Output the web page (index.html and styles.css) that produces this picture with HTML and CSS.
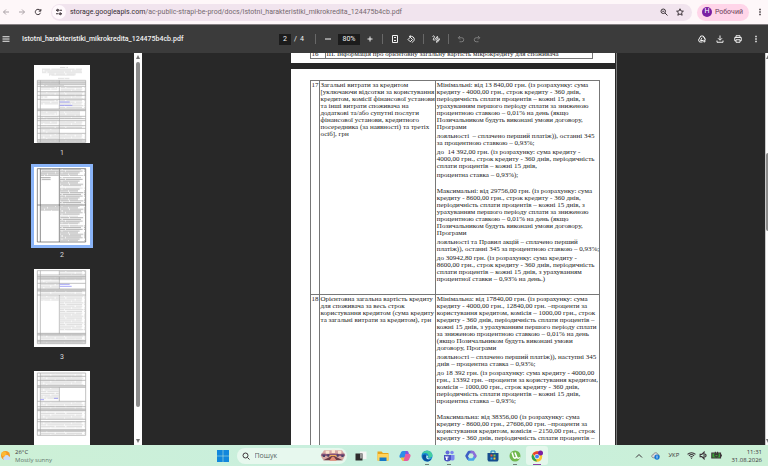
FILE: index.html
```html
<!DOCTYPE html>
<html lang="uk">
<head>
<meta charset="utf-8">
<title>Istotni_harakteristiki_mikrokredita_124475b4cb.pdf</title>
<link rel="stylesheet" href="styles.css">
</head>
<body>
<header class="browser">
  <nav class="nav">
    <button class="ico faded" aria-label="Назад"><svg viewBox="0 0 16 16"><path d="M14 8H3M8 3L3 8l5 5"/></svg></button>
    <button class="ico faded" aria-label="Вперед"><svg viewBox="0 0 16 16"><path d="M2 8h11M8 3l5 5-5 5"/></svg></button>
    <button class="ico" aria-label="Оновити"><svg viewBox="0 0 16 16"><path d="M13 9.500A5.300 5.300 0 1 1 12 4.500L13.500 6M13.700 2v4.300H9.500"/></svg></button>
  </nav>
  <div class="omnibox">
    <button class="site" aria-label="Про сайт"><svg viewBox="0 0 16 16"><path d="M2 4.500h4M10 11.500h4M9 4.500h5M2 11.500h5"/><circle cx="5.500" cy="4.500" r="2"/><circle cx="10.500" cy="11.500" r="2"/></svg></button>
    <a class="url" href="#"><span class="host">storage.googleapis.com</span>/ac-public-strapi-be-prod/docs/Istotni_harakteristiki_mikrokredita_124475b4cb.pdf</a>
    <button class="ico" aria-label="Масштаб"><svg viewBox="0 0 16 16"><circle cx="6.500" cy="6.500" r="4.500"/><path d="M10 10l5 5M4.500 6.500h4"/></svg></button>
    <button class="ico" aria-label="Закладка"><svg viewBox="0 0 16 16"><path d="M8 1.500l2 4.500 4.800.4-3.700 3.200 1.200 4.900L8 11.900l-4.300 2.600 1.200-4.900L1.200 6.400 6 6z"/></svg></button>
  </div>
  <button class="profile"><span class="avatar">Н</span>Робочий</button>
  <button class="ico" aria-label="Меню"><svg viewBox="0 0 16 16"><path class="solid" d="M6.500 1.500h3v3h-3zM6.500 6.500h3v3h-3zM6.500 11.500h3v3h-3z"/></svg></button>
</header>

<div class="toolbar">
  <div class="doc-name">
    <button class="ico" aria-label="Бічна панель"><svg viewBox="0 0 16 16"><path d="M1 3.500h14M1 8h14M1 12.500h14"/></svg></button>
    <h1>Istotni_harakteristiki_mikrokredita_124475b4cb.pdf</h1>
  </div>
  <div class="controls">
    <label class="pager"><input class="field page-no" value="2" aria-label="Сторінка"><span>/</span><span>4</span></label>
    <i class="sep"></i>
    <button class="ico" aria-label="Зменшити"><svg viewBox="0 0 16 16"><path d="M2 8h12"/></svg></button>
    <input class="field zoom" value="80%" aria-label="Масштаб">
    <button class="ico" aria-label="Збільшити"><svg viewBox="0 0 16 16"><path d="M3 8h10M8 3v10"/></svg></button>
    <i class="sep"></i>
    <button class="ico" aria-label="За розміром сторінки"><svg viewBox="0 0 16 16"><path d="M3 1h10v14H3zM6 6l2-2 2 2M6 10l2 2 2-2"/></svg></button>
    <button class="ico" aria-label="Повернути"><svg viewBox="0 0 16 16"><path d="M2 9l4.500-4.500L11 9l-4.500 4.500zM7 1L4.500 3 7 5M5 3c6-1.500 10 2 9.500 6-.3 3-2.500 5-5 5.500"/></svg></button>
    <i class="sep"></i>
    <button class="ico" aria-label="Малювати"><svg viewBox="0 0 16 16"><path d="M1 3c3-3 5 0 3 3S2 11 5 10s4-8 6-7-1 5-3 8M9 13l5-6 1.500 1.500-5 6H9z"/></svg></button>
    <i class="sep"></i>
    <button class="ico off" aria-label="Скасувати"><svg viewBox="0 0 16 16"><path d="M6 2L2.500 5.500 6 9M3 5.500h6.500a4 4 0 0 1 0 8H5"/></svg></button>
    <button class="ico off" aria-label="Повторити"><svg viewBox="0 0 16 16"><path d="M10 2l3.500 3.500L10 9M13 5.500H6.500a4 4 0 0 0 0 8H11"/></svg></button>
  </div>
  <div class="actions">
    <button class="ico" aria-label="Зберегти на Диску"><svg viewBox="0 0 16 16"><path d="M5.500 2h5l4 7M5.500 2L1 10l2 4h6M8 5.500L5 11h5M10.500 2L15 9M12.500 9v6M9.500 12h6"/></svg></button>
    <button class="ico" aria-label="Завантажити"><svg viewBox="0 0 16 16"><path d="M8 1v9M4 6.500L8 10.500l4-4M2 11v3.500h12V11"/></svg></button>
    <button class="ico" aria-label="Друк"><svg viewBox="0 0 16 16"><path d="M4 5V1.500h8V5M4 11.500H1.500V5h13v6.500H12M4 9.500h8v5H4z"/></svg></button>
    <button class="ico" aria-label="Ще"><svg viewBox="0 0 16 16"><path class="solid" d="M6.500 1.500h3v3h-3zM6.500 6.500h3v3h-3zM6.500 11.500h3v3h-3z"/></svg></button>
  </div>
</div>

<main class="workspace">
  <aside class="thumbs">
    <a class="thumb" href="#p1"><svg viewBox="0 0 168 234">
      <defs>
        <pattern id="txt" width="150" height="25" patternUnits="userSpaceOnUse"><path d="M0 2h31M33 2h44M79 2h27M108 2h40M0 7h52M54 7h29M86 7h55M0 12h22M24 12h70M96 12h50M3 17h60M65 17h18M85 17h52M0 22h40M42 22h60M104 22h28" stroke="#a0a0a0" stroke-width="2.500"/></pattern>
        <pattern id="soft" width="150" height="20" patternUnits="userSpaceOnUse"><path d="M0 2h37M40 2h50M92 2h56M0 7h62M65 7h29M97 7h47M2 12h47M52 12h70M125 12h20M0 17h28M31 17h80M113 17h30" stroke="#c6c6c6" stroke-width="2"/></pattern>
      </defs>
      <path fill="#fff" d="M0 0h168v234H0z"/>
      <path fill="url(#soft)" d="M78 5h24v5H78zM24 10h120v15H24zM45 25h80v8H45zM72 38h34v5H72z"/>
      <path fill="#ddd" d="M10 50h145v8H10zM10 132h145v5H10zM10 224h145v8H10z"/>
      <path fill="url(#soft)" d="M20 47h55v10H20zM30 59h60v5H30zM20 66h50v8H20zM80 66h72v14H80zM20 81h54v10H20zM78 81h76v22H78zM20 94h20v5H20zM20 105h52v14H20zM78 105h76v25H78zM20 139h50v10H20zM78 139h60v14H78zM20 154h52v10H20zM78 154h72v8H78zM20 168h50v10H20zM78 168h70v12H78zM20 182h130v8H20zM20 192h54v12H20zM20 207h54v15H20zM78 207h74v14H78zM20 226h130v5H20z"/>
      <path class="rule" d="M10 46h145v186H10zM19 46v186M76 46v12M76 64v68M76 137v95M10 51h145M10 58h145M10 64h145M10 80h145M10 91h145M10 103h145M10 132h145M10 137h145M10 154h145M10 161h145M10 167h145M10 182h145M10 190h145M10 205h145M10 224h145"/>
      <path stroke="#7b7bf4" stroke-width="2" d="M77 111h30M77 121h38"/>
    </svg><span>1</span></a>
    <a class="thumb current" href="#p2"><svg viewBox="0 0 168 234">
      <path fill="#fff" d="M0 0h168v234H0z"/>
      <path fill="url(#txt)" d="M20 7h54v20H20zM20 30h30v10H20zM78 7h75v20H78zM78 31h70v27H78zM78 62h75v50H78zM20 117h54v14H20zM78 117h75v28H78zM78 148h70v24H78zM78 175h75v48H78z"/>
      <path class="rule dark" d="M10 5h145v220H10zM19 5v220M76 5v220M10 114h145"/>
    </svg><span>2</span></a>
    <a class="thumb" href="#p3"><svg viewBox="0 0 168 234">
      <path fill="#fff" d="M0 0h168v234H0z"/>
      <path fill="#ddd" d="M10 22h145v7H10zM10 60h145v6H10zM10 193h145v5H10zM10 214h145v5H10z"/>
      <path fill="url(#soft)" d="M78 6h75v12H78zM20 24h130v10H20zM20 35h54v8H20zM20 45h54v14H20zM20 61h130v14H20zM20 80h54v15H20zM78 80h75v105H78zM20 194h132v16H20zM20 212h132v12H20z"/>
      <path class="rule" d="M10 5h145v219H10zM19 5v219M76 5v13M76 23v37M76 78v116M10 18h145M10 23h145M10 30h145M10 43h145M10 60h145M10 66h145M10 78h145M10 193h145M10 198h145M10 214h145M10 219h145"/>
      <path stroke="#7b7bf4" stroke-width="2" d="M77 46h30M77 52h36"/>
    </svg><span>3</span></a>
    <a class="thumb" href="#p4"><svg viewBox="0 0 168 234">
      <path fill="#fff" d="M0 0h168v234H0z"/>
      <path fill="#ddd" d="M10 44h145v5H10zM10 114h145v5H10zM10 176h145v4H10z"/>
      <path fill="url(#soft)" d="M20 8h130v34H20zM20 50h54v35H20zM20 92h132v22H20zM20 122h132v22H20zM20 150h132v22H20zM20 180h132v12H20z"/>
      <path class="rule" d="M10 6h145v187H10zM19 6v187M76 49v42M10 16h145M10 28h145M10 44h145M10 49h145M10 91h145M10 107h145M10 114h145M10 119h145M10 145h145M10 152h145M10 176h145M10 180h145"/>
      <path stroke="#7b7bf4" stroke-width="2" d="M60 82h12M19 86h11"/>
    </svg><span>4</span></a>
  </aside>
  <div class="scroll"><b class="up"></b><b class="bar tall"></b><b class="down"></b></div>

  <div class="viewer">
    <div class="pages">
    <section class="page previous">
      <table>
        <tr><td class="num">16</td><td>ІІІ. Інформація про орієнтовну загальну вартість мікрокредиту для споживача</td></tr>
      </table>
    </section>
    <section class="page" id="p2">
      <table>
        <tr>
          <td class="num">17</td>
          <td class="name">Загальні витрати за кредитом<br>[уключаючи відсотки за користування<br>кредитом, комісії фінансової установи<br>та інші витрати споживача на<br>додаткові та/або супутні послуги<br>фінансової установи, кредитного<br>посередника (за наявності) та третіх<br>осіб], грн</td>
          <td>
            <p>Мінімальні: від 13 840,00 грн. (із розрахунку: сума<br>кредиту - 4000,00 грн., строк кредиту - 360 днів,<br>періодичність сплати процентів – кожні 15 днів, з<br>урахуванням першого періоду сплати за зниженою<br>процентною ставкою – 0,01% на день (якщо<br>Позичальником будуть виконані умови договору,<br>Програми</p>
            <p>лояльності&nbsp; – сплачено перший платіж)), останні 345<br>за процентною ставкою – 0,93%;</p>
            <p>до&nbsp; 14 392,00 грн. (із розрахунку: сума кредиту -<br>4000,00 грн., строк кредиту - 360 днів, періодичність<br>сплати процентів – кожні 15 днів,</p>
            <p>процентна ставка – 0,93%);</p>
            <p class="block">Максимальні: від 29756,00 грн. (із розрахунку: сума<br>кредиту - 8600,00 грн., строк кредиту - 360 днів,<br>періодичність сплати процентів – кожні 15 днів, з<br>урахуванням першого періоду сплати за зниженою<br>процентною ставкою – 0,01% на день (якщо<br>Позичальником будуть виконані умови договору,<br>Програми</p>
            <p>лояльності та Правил акцій – сплачено перший<br>платіж)), останні 345 за процентною ставкою – 0,93%;</p>
            <p>до 30942,80 грн. (із розрахунку: сума кредиту -<br>8600,00 грн., строк кредиту - 360 днів, періодичність<br>сплати процентів – кожні 15 днів, з урахуванням<br>процентної ставки – 0,93% на день.)</p>
          </td>
        </tr>
        <tr>
          <td class="num">18</td>
          <td class="name">Орієнтовна загальна вартість кредиту<br>для споживача за весь строк<br>користування кредитом (сума кредиту<br>та загальні витрати за кредитом), грн</td>
          <td>
            <p>Мінімальна: від 17840,00 грн. (із розрахунку: сума<br>кредиту - 4000,00 грн., 12840,00 грн. –проценти за<br>користування кредитом, комісія – 1000,00 грн., строк<br>кредиту - 360 днів, періодичність сплати процентів –<br>кожні 15 днів, з урахуванням першого періоду сплати<br>за зниженою процентною ставкою – 0,01% на день<br>(якщо Позичальником будуть виконані умови<br>договору, Програми</p>
            <p>лояльності – сплачено перший платіж)), наступні 345<br>днів – процентна ставка – 0,93%;</p>
            <p>до 18 392 грн. (із розрахунку: сума кредиту - 4000,00<br>грн., 13392 грн. –проценти за користування кредитом,<br>комісія – 1000,00 грн., строк кредиту - 360 днів,<br>періодичність сплати процентів – кожні 15 днів,<br>процентна ставка – 0,93%;</p>
            <p class="block">Максимальна: від 38356,00 (із розрахунку: сума<br>кредиту - 8600,00 грн., 27606,00 грн. –проценти за<br>користування кредитом, комісія – 2150,00 грн., строк<br>кредиту - 360 днів, періодичність сплати процентів –</p>
          </td>
        </tr>
      </table>
    </section>
    </div>
  </div>
  <div class="scroll edge"><b class="up"></b><b class="bar short"></b><b class="down"></b></div>
</main>

<footer class="taskbar">
  <div class="weather">
    <svg viewBox="0 0 24 24"><circle cx="11" cy="11" r="9" fill="#f59a23"/><circle cx="8" cy="8" r="5" fill="#fdb932"/><path fill="#c9dcf8" d="M8 20a4 4 0 0 1 1-7 5 5 0 0 1 9 0 4 4 0 0 1 1 7z"/></svg>
    <div><div>26°C</div><div class="dim">Mostly sunny</div></div>
  </div>
  <div class="dock">
    <button class="app start" aria-label="Пуск"><svg viewBox="0 0 24 24"><path fill="#1287dc" d="M0 0h11.500v11.500H0zM12.500 0H24v11.500H12.500zM0 12.500h11.500V24H0zM12.500 12.500H24V24H12.500z"/></svg></button>
    <label class="search"><svg class="lens" viewBox="0 0 16 16"><circle cx="7" cy="7" r="5"/><path d="M11 11l4 4"/></svg><input placeholder="Пошук" aria-label="Пошук"><svg class="scene" viewBox="0 0 78 39"><path fill="#d8a8a3" d="M12 4h54l10 15-8 15H10L2 20z"/><path fill="#875478" d="M4 14h70v7H4z"/><path fill="#fbe5cf" d="M17 5h11v9H17zM35 2h10v10H35zM54 5h10v9H54z"/><path fill="#4c4269" d="M8 17h7v7H8zM22 16h6v7h-6zM50 16h6v7h-6zM64 17h7v7h-7z"/><path fill="#efac5a" d="M29 18h20v9H29z"/><path fill="#6b3945" d="M10 34l25-13h8l25 13z"/><path fill="#e58e78" d="M28 35l8-12h6l8 12z"/></svg></label>
    <button class="app" aria-label="Подання завдань"><svg viewBox="0 0 24 24"><path fill="#f5f5f5" d="M10 3h13v15H10z"/><path fill="#2d2d2d" d="M1 7h14v14H1z"/><path fill="#999" d="M10 7h5v10h-5z"/></svg></button>
    <button class="app" aria-label="Провідник"><svg viewBox="0 0 24 24"><path fill="#e9a51a" d="M1 3h8l3 3h11v15H1z"/><path fill="#ffd35a" d="M1 8h22v13H1z"/><path fill="#1678c8" d="M5 15h14v7H5z"/></svg></button>
    <button class="app" aria-label="Copilot"><svg viewBox="0 0 24 24"><path fill="#2c8ee8" d="M8 2h8l-5 14H4c-5 0-3-6-1-9 1-3 2-5 5-5z"/><path fill="#e85ca0" d="M16 22H8l5-14h7c5 0 3 6 1 9-1 3-2 5-5 5z"/><path fill="#efc43b" d="M3 15h8l-2 7c-4 0-4-4-6-7z"/><path fill="#884ee0" d="M13 2h3c3 0 3 3 4 6h-7z"/></svg></button>
    <button class="app running" aria-label="Edge"><svg viewBox="0 0 24 24"><circle cx="12" cy="12" r="11" fill="#1686d2"/><path fill="#43cfa0" d="M2 8C6-1 21-1 23 10c0 5-4 6-9 5 4-8-5-12-12-7z"/><path fill="#0b4f9d" d="M3 11c6-5 9 0 7 4 2 5 6 5 11 3-3 6-11 6-15 2-3-3-3-6-3-9z"/><path fill="#d8f5ed" d="M11 11c4 0 3 2 2 4-1 1 3 3 7 2-5 3-11 2-9-6z"/></svg></button>
    <button class="app running" aria-label="Teams"><svg viewBox="0 0 24 24"><circle cx="9" cy="5" r="4" fill="#646bdc"/><circle cx="18" cy="5" r="3.500" fill="#7c87ee"/><path fill="#7c87ee" d="M13 10h10v8c-1 4-7 4-10 1z"/><path fill="#4b54c0" d="M2 10h14v9c-2 5-12 5-14 0z"/><path fill="#fff" d="M4 13h7v2H9v5H6v-5H4z"/></svg></button>
    <button class="app" aria-label="Microsoft 365"><svg viewBox="0 0 24 24"><g fill="none" stroke-width="5" stroke-linejoin="round"><path stroke="#3d5fc4" d="M14 4H8L3 12l4 7"/><path stroke="#49a5e8" d="M6 19h10l4-6"/><path stroke="#8b6ed8" d="M11 4h5l5 8-2 3"/></g></svg></button>
    <button class="app" aria-label="Store"><svg viewBox="0 0 24 24"><path fill="none" stroke="#167cc4" stroke-width="2" d="M8 6V2h8v4"/><path fill="#174e8d" d="M1 6h22v14l-2 3H3l-2-3z"/><path fill="#f05a35" d="M7 9h4v4H7z"/><path fill="#83c441" d="M13 9h4v4h-4z"/><path fill="#38aaf0" d="M7 15h4v4H7z"/><path fill="#ffc833" d="M13 15h4v4h-4z"/></svg></button>
    <button class="app running" aria-label="uTorrent"><svg viewBox="0 0 24 24"><circle cx="12" cy="12" r="11" fill="#71b84d"/><path fill="none" stroke="#fff" stroke-width="3" d="M6 5l3 9c2 4 6 2 6-1l-3-8M15 13c1 4 4 4 7 2"/></svg></button>
    <button class="app running active" aria-label="Chrome"><svg viewBox="0 0 24 24"><circle cx="12" cy="13" r="10.500" fill="#fbc62f"/><path fill="#e74335" d="M12 13L3 8c5-8 15-7 19 0H12z"/><path fill="#2da44f" d="M3 8l6 9 3 6C2 23-1 14 3 8z"/><circle cx="12" cy="13" r="5" fill="#fff"/><circle cx="12" cy="13" r="4" fill="#4285f4"/><circle cx="19" cy="6" r="5" fill="#7b1fa2"/></svg></button>
  </div>
  <div class="tray">
    <button class="ico" aria-label="Приховані значки"><svg viewBox="0 0 16 16"><path d="M2 11l6-6 6 6"/></svg></button>
    <svg class="cloud" viewBox="0 0 24 24"><path fill="#ddd" stroke="#777" stroke-width="2" d="M6 18c-6-1-5-8 0-8 2-7 11-7 12-1 5 0 5 9 0 9z"/><circle cx="16" cy="16" r="7" fill="#1477d4"/><path stroke="#fff" stroke-width="2" d="M16 12v8"/></svg>
    <span class="lang">УКР</span>
    <span class="status">
      <svg viewBox="0 0 16 16"><path d="M1 6c4-4 10-4 14 0M3.500 8.500c3-3 6-3 9 0M6 11c1-1 3-1 4 0M8 13v1"/></svg>
      <svg viewBox="0 0 16 16"><path d="M2 6v4h3l4 4V2L5 6zM11 5c2 2 2 4 0 6"/></svg>
      <svg class="battery" viewBox="0 0 22 16"><path fill="#3aa33a" d="M1.500 3.500h16v9h-16zM19 6v4"/><path d="M8 1v4M12 1v4M7 6h6v3l-3 2-3-2z"/></svg>
    </span>
    <time class="clock">11:31<br>31.08.2026</time>
  </div>
</footer>
</body>
</html>
```
FILE: styles.css
```css
* { box-sizing: border-box; }
body {
  margin: 0;
  height: 100vh;
  display: flex;
  flex-direction: column;
  overflow: hidden;
  font-family: Roboto, "Liberation Sans", sans-serif;
  font-size: 7px;
  line-height: 9px;
  color: #3c3439;
}
button, input {
  font: inherit;
  color: inherit;
  border: 0;
  padding: 0;
  margin: 0;
  background: none;
}
a { color: inherit; text-decoration: none; }
svg { display: block; }

.ico {
  width: 12px;
  height: 12px;
  flex: none;
  display: grid;
  place-items: center;
}
.ico svg { width: 8px; height: 8px; }
.ico svg, .site svg, .lens, .status svg {
  fill: none;
  stroke: currentColor;
  stroke-width: 2;
}
.ico .solid { fill: currentColor; stroke: none; }

/* browser bar */
.browser {
  height: 25px;
  flex: none;
  display: flex;
  align-items: center;
  gap: 5px;
  padding: 0 2px 0 0;
  background: #fef7f9;
  border-bottom: 1px solid #858083;
}
.nav { display: flex; gap: 4px; width: 46px; }
.faded { color: #aaa2a7; }
.omnibox {
  flex: 1;
  height: 17px;
  display: flex;
  align-items: center;
  gap: 4px;
  padding: 0 6px 0 1px;
  border-radius: 9px;
  background: #f1e4ee;
}
.site {
  width: 14px;
  height: 14px;
  border-radius: 50%;
  background: #fff9fc;
  display: grid;
  place-items: center;
}
.site svg { width: 8px; height: 8px; }
.url { flex: 1; color: #75696f; white-space: nowrap; }
.host { color: #352d32; }
.profile {
  height: 17px;
  display: flex;
  align-items: center;
  gap: 3px;
  padding: 0 6px 0 5px;
  border-radius: 9px;
  background: #ffd5e9;
  color: #6b4159;
}
.avatar {
  width: 10px;
  height: 10px;
  border-radius: 50%;
  background: #7b1fa2;
  color: #fff;
  text-align: center;
}

/* document toolbar */
.toolbar {
  height: 28px;
  flex: none;
  display: grid;
  grid-template-columns: 1fr auto 1fr;
  align-items: center;
  padding-right: 6px;
  background: #3b3b3b;
  color: #f1f1f1;
}
.doc-name { display: flex; align-items: center; gap: 10px; }
h1 { margin: 0; font-size: 7px; line-height: 9px; font-weight: 500; white-space: nowrap; }
.controls { display: flex; align-items: center; gap: 4px; }
.pager { display: flex; align-items: center; gap: 3px; width: 30px; }
.field { height: 11px; background: #1c1c1c; text-align: center; }
.page-no { width: 12px; }
.zoom { width: 22px; }
.sep { width: 1px; height: 10px; margin: 0 2px; background: #686868; }
.off { color: #7d7d7d; }
.actions { display: flex; justify-content: flex-end; gap: 6px; }

/* thumbnails and document */
.workspace { flex: 1; min-height: 0; display: flex; background: #282828; }
.thumbs {
  width: 134px;
  padding: 9px 10px 0 0;
  overflow: hidden;
  display: flex;
  flex-direction: column;
  align-items: center;
  gap: 4px;
  color: #ddd;
  text-align: center;
}
.thumb { flex: none; }
.thumb svg { width: 62px; height: 84px; padding: 3px; }
.current svg { background: #8ab4f8; }
.thumb span { display: block; line-height: 14px; }
.rule { fill: none; stroke: #a2a2a2; stroke-width: 2; }
.dark { stroke: #555; }

.scroll {
  width: 8px;
  flex: none;
  display: flex;
  flex-direction: column;
  align-items: center;
  gap: 3px;
  padding: 2px 0;
  overflow: hidden;
  background: #fdfdfd;
}
.up, .down { border: 2px solid transparent; }
.up { border-top: 0; border-bottom: 4px solid #777; }
.down { border-bottom: 0; border-top: 4px solid #777; margin-top: auto; }
.bar { width: 4px; border-radius: 2px; background: #8b8b8b; }
.tall { flex: 0 0 89%; }
.edge { width: 3px; align-items: flex-start; border-left: 1px solid #ccc; }
.short { margin-top: 91px; flex: 0 0 20%; }

.viewer {
  flex: 1;
  min-width: 0;
  overflow: hidden;
  display: flex;
  justify-content: center;
  align-items: flex-start;
}
.pages {
  width: 52%;
  min-width: 326px;
  display: flex;
  flex-direction: column;
  gap: 6px;
  padding-right: 1px;
  border-right: 1px solid #777;
}
.page {
  flex: none;
  padding: 11px 22px 0 19px;
  background: #fff;
  color: #222;
  font-family: "Liberation Serif", serif;
  font-size: 7px;
  line-height: 7px;
}
.previous {
  height: 10px;
  overflow: hidden;
  display: flex;
  flex-direction: column;
  justify-content: flex-end;
  padding-top: 0;
  padding-bottom: 4px;
}
table { width: 100%; border-collapse: collapse; }
td {
  border: 1px solid #777;
  padding: 1px 0 11px 1px;
  vertical-align: top;
  white-space: nowrap;
}
.previous td { padding-bottom: 0; }
.num { width: 15px; }
.name { width: 40%; }
p { margin: 0; }
p + p { margin-top: 2px; }
p + .block { margin-top: 9px; }

/* taskbar */
.taskbar {
  height: 21px;
  flex: none;
  display: grid;
  grid-template-columns: 1fr auto 1fr;
  align-items: center;
  padding-right: 4px;
  font-family: "Open Sans", "Liberation Sans", sans-serif;
  font-size: 6px;
  background: linear-gradient(90deg, #cdf0d6, #c8efdf 50%, #cbf0d6);
}
.weather { display: flex; align-items: center; gap: 3px; line-height: 8px; }
.weather svg { width: 12px; height: 12px; }
.dim { color: #66786f; }
.dock { display: flex; align-items: center; }
.app {
  width: 22px;
  height: 19px;
  display: grid;
  place-items: center;
  position: relative;
}
.app svg { width: 12px; height: 12px; }
.start { width: 12px; margin-right: 8px; }
.search {
  width: 110px;
  height: 16px;
  margin-right: 3px;
  padding: 0 1px 0 5px;
  display: flex;
  align-items: center;
  gap: 5px;
  border-radius: 8px;
  background: #e7f8ee;
  font-size: 7px;
}
.search input { flex: 1; min-width: 0; }
.search input::placeholder { color: #57665f; opacity: 1; }
.lens { width: 8px; height: 8px; }
.scene { width: 26px; height: 13px; }
.active { background: #e4f7ec; border-radius: 3px; }
.running::after {
  content: "";
  position: absolute;
  bottom: 0;
  left: 50%;
  width: 4px;
  height: 1px;
  margin-left: -2px;
  background: #718078;
}
.active::after { width: 8px; margin-left: -4px; background: #8a3fa5; }
.tray {
  display: flex;
  align-items: center;
  justify-content: flex-end;
  gap: 8px;
  padding-right: 2px;
}
.tray .ico { margin-right: -2px; }
.cloud { width: 9px; height: 9px; }
.status { display: flex; align-items: center; gap: 3px; }
.status svg { width: 9px; height: 9px; }
.status .battery { width: 12px; }
.clock { text-align: right; line-height: 8px; }
```
